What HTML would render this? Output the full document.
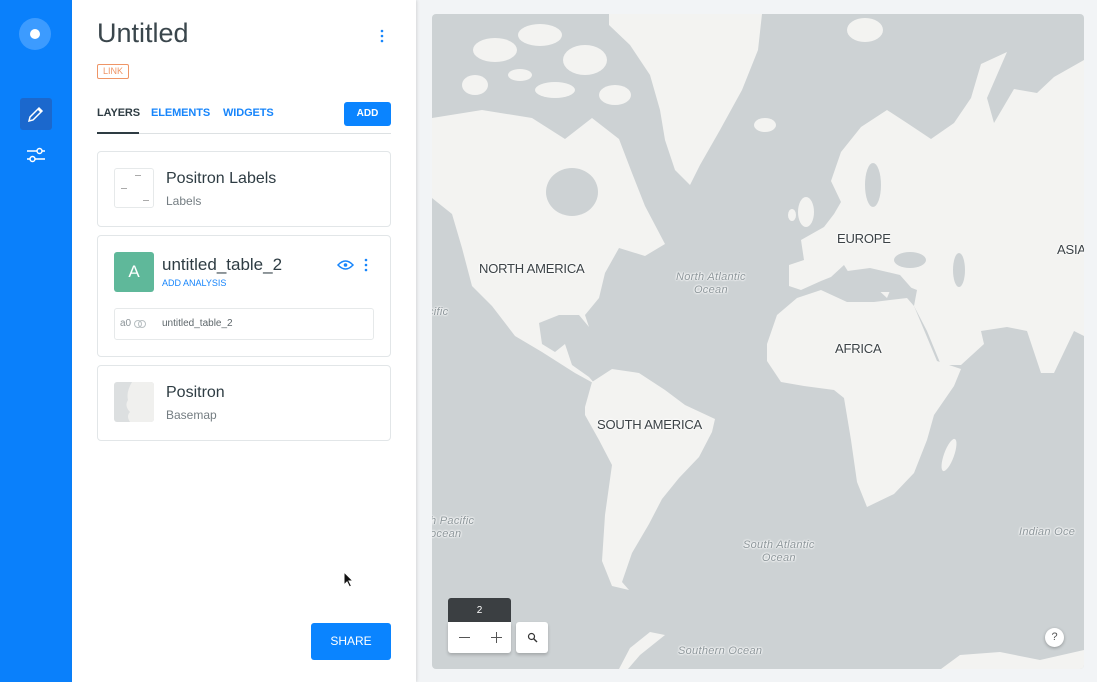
<!DOCTYPE html>
<html><head><meta charset="utf-8"><style>
*{margin:0;padding:0;box-sizing:border-box}
body{width:1097px;height:682px;overflow:hidden;background:#f2f4f6;font-family:"Liberation Sans",sans-serif;position:relative}
.abs{position:absolute}
.side{left:0;top:0;width:72px;height:682px;background:#0a80fb}
.panel{left:72px;top:0;width:344px;height:682px;background:#fff;box-shadow:1px 0 3px rgba(0,0,0,.12)}
.card{position:absolute;left:97px;width:294px;background:#fff;border:1px solid #e2e6e8;border-radius:4px}
.t{position:absolute;white-space:nowrap}
.ol{font-style:italic;color:#8e979b;font-size:11px;text-shadow:0 0 2px #fff,0 0 2px #fff,0 0 2px #fff;text-align:center;line-height:13px;letter-spacing:.3px}
.cl{font-size:13px;color:#3b4246;text-shadow:0 0 2px #fff,0 0 2px #fff,0 0 3px #fff;letter-spacing:-.2px}
</style></head><body>
<div class="abs side"></div>
<div class="abs" style="left:19px;top:18px;width:32px;height:32px;border-radius:50%;background:#3c9bff"></div>
<div class="abs" style="left:30px;top:29px;width:10px;height:10px;border-radius:50%;background:#fff"></div>
<div class="abs" style="left:20px;top:98px;width:32px;height:32px;border-radius:3px;background:#1b68cd"></div>
<svg class="abs" style="left:26px;top:104px" width="20" height="20" viewBox="0 0 20 20"><path d="M3 17 L4 13 L13 4 L16 7 L7 16 Z M12 5 L15 8" fill="none" stroke="#fff" stroke-width="1.5"/></svg>
<svg class="abs" style="left:26px;top:145px" width="20" height="20" viewBox="0 0 20 20"><g fill="none" stroke="#fff" stroke-width="1.5"><path d="M1 6 H11 M16 6 H19 M1 14 H4 M9 14 H19"/><circle cx="13.5" cy="6" r="2.5"/><circle cx="6.5" cy="14" r="2.5"/></g></svg>

<div class="abs panel"></div>
<div class="t" style="left:97px;top:18px;font-size:27px;color:#3a464c;font-weight:300">Untitled</div>
<svg class="abs" style="left:379px;top:29px" width="6" height="14"><circle cx="3" cy="2" r="1.3" fill="#1785fb"/><circle cx="3" cy="7" r="1.3" fill="#1785fb"/><circle cx="3" cy="12" r="1.3" fill="#1785fb"/></svg>
<div class="t" style="left:97px;top:64px;width:32px;height:15px;border:1px solid #ef9566;border-radius:2px;font-size:9px;color:#ef9566;text-align:center;line-height:13px">LINK</div>
<div class="t" style="left:97px;top:107px;font-size:11px;color:#2e3c43;font-weight:600;letter-spacing:-.1px">LAYERS</div>
<div class="t" style="left:151px;top:107px;font-size:11px;color:#1785fb;font-weight:600;letter-spacing:-.1px">ELEMENTS</div>
<div class="t" style="left:223px;top:107px;font-size:11px;color:#1785fb;font-weight:600;letter-spacing:-.1px">WIDGETS</div>
<div class="t" style="left:344px;top:102px;width:47px;height:24px;background:#0a84ff;border-radius:3px;color:#fff;font-size:10px;font-weight:600;text-align:center;line-height:24px">ADD</div>
<div class="abs" style="left:97px;top:133px;width:294px;height:1px;background:#dde1e3"></div>
<div class="abs" style="left:97px;top:132px;width:42px;height:2px;background:#2e3c43"></div>

<div class="card" style="top:151px;height:76px"></div>
<div class="abs" style="left:114px;top:168px;width:40px;height:40px;border:1px solid #e6e9ea;border-radius:3px"></div>
<div class="abs" style="left:135px;top:175px;width:6px;height:1px;background:#aaa"></div>
<div class="abs" style="left:121px;top:188px;width:6px;height:1px;background:#aaa"></div>
<div class="abs" style="left:143px;top:200px;width:6px;height:1px;background:#aaa"></div>
<div class="t" style="left:166px;top:170px;font-size:16px;color:#2e3c43">Positron Labels</div>
<div class="t" style="left:166px;top:194px;font-size:12px;color:#747d82">Labels</div>

<div class="card" style="top:235px;height:122px"></div>
<div class="abs" style="left:114px;top:252px;width:40px;height:40px;border-radius:3px;background:#5fb89a;color:#fff;font-size:17px;text-align:center;line-height:40px">A</div>
<div class="t" style="left:162px;top:255px;font-size:17px;color:#2e3c43">untitled_table_2</div>
<div class="t" style="left:162px;top:278px;font-size:9px;color:#1785fb">ADD ANALYSIS</div>
<svg class="abs" style="left:337px;top:258px" width="17" height="14" viewBox="0 0 17 14"><path d="M1 7 Q8.5 -1 16 7 Q8.5 15 1 7Z" fill="none" stroke="#1785fb" stroke-width="1.5"/><circle cx="8.5" cy="7" r="1.8" fill="#1785fb"/></svg>
<svg class="abs" style="left:363px;top:258px" width="6" height="14"><circle cx="3" cy="2" r="1.3" fill="#1785fb"/><circle cx="3" cy="7" r="1.3" fill="#1785fb"/><circle cx="3" cy="12" r="1.3" fill="#1785fb"/></svg>
<div class="abs" style="left:114px;top:308px;width:260px;height:32px;border:1px solid #e6e9ea;border-radius:3px"></div>
<div class="t" style="left:120px;top:318px;font-size:10px;color:#8c9498">a0</div>
<svg class="abs" style="left:133px;top:319px" width="14" height="10"><circle cx="5" cy="5" r="3.5" fill="none" stroke="#b8bfc2"/><circle cx="9" cy="5" r="3.5" fill="none" stroke="#b8bfc2"/></svg>
<div class="t" style="left:162px;top:318px;font-size:10px;color:#5d666a">untitled_table_2</div>

<div class="card" style="top:365px;height:76px"></div>
<div class="abs" style="left:114px;top:382px;width:40px;height:40px;border-radius:3px;background:#dcdfe0;overflow:hidden"><svg width="40" height="40"><path d="M18 0 H40 V40 H16 Q12 34 16 30 Q10 24 14 18 Q12 10 18 0Z" fill="#f0f0ee"/></svg></div>
<div class="t" style="left:166px;top:384px;font-size:16px;color:#2e3c43">Positron</div>
<div class="t" style="left:166px;top:408px;font-size:12px;color:#747d82">Basemap</div>

<svg class="abs" style="left:343px;top:571px" width="12" height="18" viewBox="0 0 12 18"><path d="M1 1 L1 14 L4 11 L6.5 16 L8.5 15 L6 10 L10 10 Z" fill="#111" stroke="#fff" stroke-width="1"/></svg>
<div class="t" style="left:311px;top:623px;width:80px;height:37px;background:#0a84ff;border-radius:3px;color:#fff;font-size:12px;text-align:center;line-height:37px">SHARE</div>

<div class="abs" style="left:432px;top:14px;width:652px;height:655px;border-radius:4px;overflow:hidden;background:#cdd2d4">
<svg width="652" height="655" viewBox="432 14 652 655" style="position:absolute;left:0;top:0">
<g fill="#f3f3f1">
<polygon points="432,118 482,110 532,118 565,139 592,118 619,139 632,173 645,206 665,244 645,256 619,248 605,273 599,298 585,315 589,327 579,315 559,315 539,323 542,344 555,352 565,344 572,365 589,377 595,384 575,373 542,352 515,336 492,306 472,286 462,248 452,214 432,198"/>
<ellipse cx="495" cy="50" rx="22" ry="12"/><ellipse cx="540" cy="35" rx="22" ry="11"/><ellipse cx="585" cy="60" rx="22" ry="15"/><ellipse cx="615" cy="95" rx="16" ry="10"/><ellipse cx="555" cy="90" rx="20" ry="8"/><ellipse cx="475" cy="85" rx="13" ry="10"/><ellipse cx="520" cy="75" rx="12" ry="6"/>
<polygon points="609,14 762,14 758,50 742,90 720,130 700,165 690,185 675,170 665,140 660,110 650,75 630,45 609,25"/>
<ellipse cx="765" cy="125" rx="11" ry="7"/>
<polygon points="585,407 592,382 612,369 639,373 665,390 685,405 715,419 712,432 699,457 679,478 662,499 649,524 632,553 622,582 629,590 612,586 602,561 605,515 612,465 599,440 585,415"/>
<polygon points="767,344 777,315 797,298 821,290 847,302 874,302 907,298 914,306 937,361 961,369 954,386 934,415 927,440 914,473 894,494 867,507 857,482 851,440 844,398 834,390 804,386 781,382 767,361"/>
<ellipse cx="949" cy="455" rx="5" ry="17" transform="rotate(20 949 455)"/>
<polygon points="789,265 804,260 801,240 824,227 834,214 841,202 831,181 841,152 861,127 887,110 907,123 931,139 954,123 971,98 981,64 1007,52 987,98 994,123 1014,89 1037,93 1054,77 1084,60 1084,336 1074,331 1054,373 1041,373 1027,331 1007,327 981,331 984,344 961,365 941,365 927,331 914,306 917,290 894,281 887,298 874,286 854,281 844,265 831,277 821,281 801,290 789,286"/>
<ellipse cx="806" cy="212" rx="8" ry="15"/><ellipse cx="792" cy="215" rx="4" ry="6"/>
<ellipse cx="865" cy="30" rx="18" ry="12"/>
<polygon points="941,669 960,655 1000,652 1040,660 1084,650 1084,669"/>
<polygon points="619,669 630,648 650,632 665,635 640,655 628,669"/>
</g>
<g fill="#cdd2d4">
<ellipse cx="572" cy="192" rx="26" ry="24"/>
<ellipse cx="910" cy="260" rx="16" ry="8"/>
<ellipse cx="959" cy="270" rx="6" ry="17"/>
<ellipse cx="873" cy="185" rx="8" ry="22"/>
<polygon points="840,272 870,268 900,275 915,292 880,292 850,282"/>
</g>
</svg>
<div class="t cl" style="left:47px;top:247px">NORTH AMERICA</div>
<div class="t cl" style="left:165px;top:403px">SOUTH AMERICA</div>
<div class="t cl" style="left:405px;top:217px">EUROPE</div>
<div class="t cl" style="left:403px;top:327px">AFRICA</div>
<div class="t cl" style="left:625px;top:228px">ASIA</div>
<div class="t ol" style="left:244px;top:257px">North Atlantic<br>Ocean</div>
<div class="t ol" style="left:311px;top:525px">South Atlantic<br>Ocean</div>
<div class="t ol" style="left:-4px;top:292px;text-align:left">cific</div>
<div class="t ol" style="left:-2px;top:501px;text-align:left">h Pacific<br>ocean</div>
<div class="t ol" style="left:587px;top:512px;text-align:left">Indian Oce</div>
<div class="t ol" style="left:246px;top:631px">Southern Ocean</div>
<div class="abs" style="left:16px;top:584px;width:63px;height:25px;background:#3b3f42;border-radius:3px 3px 0 0;color:#fff;font-size:10px;text-align:center;line-height:25px">2</div>
<div class="abs" style="left:16px;top:608px;width:63px;height:31px;background:#fff;border-radius:0 0 3px 3px;box-shadow:0 2px 3px rgba(0,0,0,.2)"></div>
<div class="abs" style="left:27px;top:623px;width:11px;height:1px;background:#555"></div>
<div class="abs" style="left:59px;top:623px;width:11px;height:1px;background:#555"></div>
<div class="abs" style="left:64px;top:618px;width:1px;height:11px;background:#555"></div>
<div class="abs" style="left:84px;top:608px;width:32px;height:31px;background:#fff;border-radius:3px;box-shadow:0 2px 3px rgba(0,0,0,.2)"></div>
<svg class="abs" style="left:95px;top:618px" width="11" height="11"><circle cx="4.5" cy="4.5" r="3" fill="none" stroke="#333" stroke-width="1.2"/><path d="M6.7 6.7 L10 10" stroke="#333" stroke-width="1.4"/></svg>
<div class="abs" style="left:613px;top:614px;width:19px;height:19px;border-radius:50%;background:#fff;box-shadow:0 1px 3px rgba(0,0,0,.3);font-size:11px;color:#555;text-align:center;line-height:19px">?</div>
</div>
</body></html>
